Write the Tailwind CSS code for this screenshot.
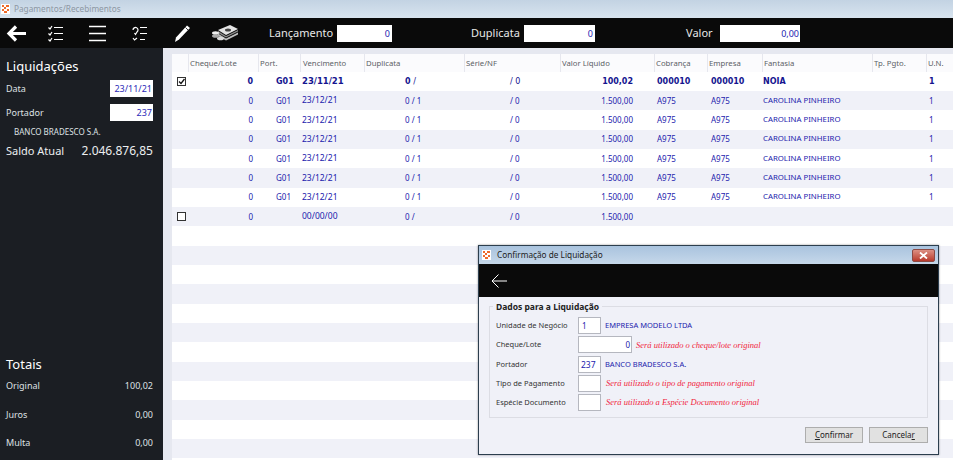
<!DOCTYPE html>
<html lang="pt-BR">
  <head>
    <meta charset="UTF-8" />
    <title>Pagamentos/Recebimentos</title>
    <script src="https://cdn.jsdelivr.net/npm/@tailwindcss/browser@4"></script>
  </head>
  <body class="relative h-[460px] w-[953px] overflow-hidden bg-[#e6e8f0] font-['Noto_Sans',sans-serif] text-[8px]">
    <!-- Title bar -->
    <div class="flex h-[18px] items-center gap-[4px] bg-gradient-to-b from-[#c3d3e3] to-[#d8e4ef] pl-[1px] text-[8.25px] text-[#8d97a3]">
      <svg class="h-[10px] w-[9px]" viewBox="0 0 9 10"><rect width="9" height="10" fill="#fff"/><path d="M1 1h2v2H1zM5 1h3v2H5zM3 3h2v2H3zM1 5h2v2H1zM6 5h2v2H6zM3 7h3v2H3z" fill="#ef6a2a"/></svg>
      <span>Pagamentos/Recebimentos</span>
    </div>

    <!-- Toolbar -->
    <div class="flex h-[30px] items-center bg-[#0a0a0a] text-white">
      <svg class="ml-[6px] h-[17px] w-[20px]" viewBox="0 0 20 17" fill="none" stroke="#fff" stroke-width="3.2"><path d="M20 8.500H3M10 1.500 3 8.500l7 7"/></svg>
      <svg class="ml-[22px] h-[17px] w-[15px]" viewBox="0 0 15 17" fill="none" stroke="#fff" stroke-width="1.2"><path d="M6 2.500h9M6 8.500h9M6 14.500h9M0.500 2.500l1.500 1.500 2-3M0.500 8.500l1.500 1.500 2-3M0.500 14.500l1.500 1.500 2-3"/></svg>
      <svg class="ml-[26px] h-[17px] w-[17px]" viewBox="0 0 17 17" fill="none" stroke="#fff" stroke-width="1.600"><path d="M0 1.500h17M0 8.500h17M0 15.500h17"/></svg>
      <svg class="ml-[26px] h-[17px] w-[15px]" viewBox="0 0 15 17" fill="none" stroke="#fff" stroke-width="1.200"><path d="M8 2.500h7M8 8.500h7M8 14.500h5M1 5a2.500 2.500 0 1 1 4 2L3.500 9.500l-1-1.500M1 13l1.500 2L5 13"/></svg>
      <svg class="ml-[28px] h-[17px] w-[15px]" viewBox="0 0 15 17" fill="#fff"><path d="M12 0.500 15 3 4 14.500 0 17l1-4.500z"/><path d="M10.500 2.500l2.500 2.500" stroke="#0a0a0a" stroke-width=".8"/></svg>
      <svg class="ml-[22px] h-[16px] w-[26px]" viewBox="0 0 26 16"><path d="M6 5 18 0l8 4-12 6z" fill="#e4e4e4"/><path d="M6 6 14 11 26 5v1.500L14 12.500 6 8z" fill="#8a8a8a"/><path d="M6 8.500 14 13.500 26 7.500v2L14 15.500 6 11z" fill="#bdbdbd"/><ellipse cx="16" cy="5" rx="3" ry="1.500" fill="#444"/><ellipse cx="3.500" cy="8" rx="3.500" ry="1.800" fill="#eee"/><ellipse cx="3.500" cy="11" rx="3.500" ry="1.800" fill="#aaa"/><ellipse cx="8.500" cy="13.500" rx="3.500" ry="1.800" fill="#ddd"/></svg>
      <span class="ml-[31px] w-[63px] text-[11px] whitespace-nowrap text-[#e8e8e8]">Lançamento</span>
      <div class="ml-[5px] h-[17px] w-[55px] bg-white pr-[2px] text-right text-[9px] leading-[17px] text-[#2323b0]">0</div>
      <span class="ml-[79px] w-[48px] text-[11px] whitespace-nowrap text-[#e8e8e8]">Duplicata</span>
      <div class="ml-[5px] h-[17px] w-[71px] bg-white pr-[2px] text-right text-[9px] leading-[17px] text-[#2323b0]">0</div>
      <span class="ml-[91px] w-[27px] text-[11px] whitespace-nowrap text-[#e8e8e8]">Valor</span>
      <div class="ml-[7px] h-[17px] w-[80px] bg-white pr-[1px] text-right text-[9px] leading-[17px] text-[#2323b0]">0,00</div>
    </div>

    <div class="flex h-[412px]">
      <!-- Sidebar -->
      <aside class="flex w-[163px] flex-col bg-[#1b1e23] pl-[6px] pr-[10px] text-[#dfe1e4]">
        <h1 class="mt-[9px] text-[13px] leading-[18px] text-white">Liquidações</h1>
        <div class="mt-[5px] flex h-[17px] items-center justify-between text-[9px]">
          <span>Data</span>
          <div class="h-[17px] w-[43px] bg-white pr-[1px] text-right leading-[17px] text-[#2b2bb8]">23/11/21</div>
        </div>
        <div class="mt-[7px] flex h-[17px] items-center justify-between text-[9px]">
          <span>Portador</span>
          <div class="h-[17px] w-[43px] bg-white pr-[1px] text-right leading-[17px] text-[#2b2bb8]">237</div>
        </div>
        <p class="mt-[5px] pl-[8px] text-[8px] leading-[12px]">BANCO BRADESCO S.A.</p>
        <div class="mt-[5px] flex justify-between text-[12px] leading-[16px] text-[#eceef0]">
          <span class="text-[11px]">Saldo Atual</span>
          <span>2.046.876,85</span>
        </div>
        <h2 class="mt-[196px] text-[13px] leading-[18px] text-white">Totais</h2>
        <div class="mt-[6px] flex justify-between text-[9px] leading-[14px]"><span>Original</span><span>100,02</span></div>
        <div class="mt-[15px] flex justify-between text-[9px] leading-[14px]"><span>Juros</span><span>0,00</span></div>
        <div class="mt-[14px] flex justify-between text-[9px] leading-[14px]"><span>Multa</span><span>0,00</span></div>
      </aside>

      <!-- Grid -->
      <main class="ml-[9px] mt-[6px] w-[781px] bg-white text-[8px] text-[#2222ad]">
        <div class="grid h-[18px] grid-cols-[16px_70px_42px_64px_100px_96px_94px_53px_55px_110px_54px_27px] items-center bg-[#fbfbfd] text-[7.75px] leading-[18px] text-[#5b5f66]">
          <span></span>
          <span class="border-l border-[#e6e7ee] pl-[1px]">Cheque/Lote</span>
          <span class="border-l border-[#e6e7ee] pl-[1px]">Port.</span>
          <span class="border-l border-[#e6e7ee] pl-[2px]">Vencimento</span>
          <span class="border-l border-[#e6e7ee] pl-[1px]">Duplicata</span>
          <span class="border-l border-[#e6e7ee] pl-[1px]">Série/NF</span>
          <span class="border-l border-[#e6e7ee] pl-[1px]">Valor Líquido</span>
          <span class="border-l border-[#e6e7ee] pl-[1px]">Cobrança</span>
          <span class="border-l border-[#e6e7ee] pl-[1px]">Empresa</span>
          <span class="border-l border-[#e6e7ee] pl-[1px]">Fantasia</span>
          <span class="border-l border-[#e6e7ee] pl-[1px]">Tp. Pgto.</span>
          <span class="border-l border-[#e6e7ee] pl-[1px]">U.N.</span>
        </div>

        <div>
          <div class="grid h-[19px] grid-cols-[16px_70px_42px_64px_100px_96px_94px_53px_55px_110px_54px_27px] items-center font-['DejaVu_Sans',sans-serif] font-bold text-[#14148f]">
            <svg class="ml-[5px] h-[9px] w-[9px]" viewBox="0 0 9 9" fill="none"><rect x=".5" y=".5" width="8" height="8" stroke="#333"/><path d="M2 4.500 4 6.500 7.500 2" stroke="#111" stroke-width="1.300"/></svg>
            <span class="pr-[5px] text-right">0</span><span class="pl-[18px]">G01</span><span class="pl-[2px] text-[8.5px]">23/11/21</span><span class="pl-[41px]">0 <span class="font-normal">/</span></span><span class="pl-[46px] font-normal">/ 0</span><span class="pr-[21px] text-right">100,02</span><span class="pl-[3px]">000010</span><span class="pl-[4px]">000010</span><span class="pl-[1px]">NOIA</span><span></span><span class="pl-[3px]">1</span>
          </div>
          <div class="grid h-[19.33px] grid-cols-[16px_70px_42px_64px_100px_96px_94px_53px_55px_110px_54px_27px] items-center bg-[#f0f1f8]">
            <span></span><span class="pr-[5px] text-right">0</span><span class="pl-[18px]">G01</span><span class="pl-[2px] text-[8.5px]">23/12/21</span><span class="pl-[41px]">0 / 1</span><span class="pl-[46px]">/ 0</span><span class="pr-[21px] text-right">1.500,00</span><span class="pl-[3px]">A975</span><span class="pl-[4px]">A975</span><span class="pl-[1px] text-[7.8px]">CAROLINA PINHEIRO</span><span></span><span class="pl-[3px]">1</span>
          </div>
          <div class="grid h-[19.33px] grid-cols-[16px_70px_42px_64px_100px_96px_94px_53px_55px_110px_54px_27px] items-center">
            <span></span><span class="pr-[5px] text-right">0</span><span class="pl-[18px]">G01</span><span class="pl-[2px] text-[8.5px]">23/12/21</span><span class="pl-[41px]">0 / 1</span><span class="pl-[46px]">/ 0</span><span class="pr-[21px] text-right">1.500,00</span><span class="pl-[3px]">A975</span><span class="pl-[4px]">A975</span><span class="pl-[1px] text-[7.8px]">CAROLINA PINHEIRO</span><span></span><span class="pl-[3px]">1</span>
          </div>
          <div class="grid h-[19.33px] grid-cols-[16px_70px_42px_64px_100px_96px_94px_53px_55px_110px_54px_27px] items-center bg-[#f0f1f8]">
            <span></span><span class="pr-[5px] text-right">0</span><span class="pl-[18px]">G01</span><span class="pl-[2px] text-[8.5px]">23/12/21</span><span class="pl-[41px]">0 / 1</span><span class="pl-[46px]">/ 0</span><span class="pr-[21px] text-right">1.500,00</span><span class="pl-[3px]">A975</span><span class="pl-[4px]">A975</span><span class="pl-[1px] text-[7.8px]">CAROLINA PINHEIRO</span><span></span><span class="pl-[3px]">1</span>
          </div>
          <div class="grid h-[19.33px] grid-cols-[16px_70px_42px_64px_100px_96px_94px_53px_55px_110px_54px_27px] items-center">
            <span></span><span class="pr-[5px] text-right">0</span><span class="pl-[18px]">G01</span><span class="pl-[2px] text-[8.5px]">23/12/21</span><span class="pl-[41px]">0 / 1</span><span class="pl-[46px]">/ 0</span><span class="pr-[21px] text-right">1.500,00</span><span class="pl-[3px]">A975</span><span class="pl-[4px]">A975</span><span class="pl-[1px] text-[7.8px]">CAROLINA PINHEIRO</span><span></span><span class="pl-[3px]">1</span>
          </div>
          <div class="grid h-[19.33px] grid-cols-[16px_70px_42px_64px_100px_96px_94px_53px_55px_110px_54px_27px] items-center bg-[#f0f1f8]">
            <span></span><span class="pr-[5px] text-right">0</span><span class="pl-[18px]">G01</span><span class="pl-[2px] text-[8.5px]">23/12/21</span><span class="pl-[41px]">0 / 1</span><span class="pl-[46px]">/ 0</span><span class="pr-[21px] text-right">1.500,00</span><span class="pl-[3px]">A975</span><span class="pl-[4px]">A975</span><span class="pl-[1px] text-[7.8px]">CAROLINA PINHEIRO</span><span></span><span class="pl-[3px]">1</span>
          </div>
          <div class="grid h-[19.33px] grid-cols-[16px_70px_42px_64px_100px_96px_94px_53px_55px_110px_54px_27px] items-center">
            <span></span><span class="pr-[5px] text-right">0</span><span class="pl-[18px]">G01</span><span class="pl-[2px] text-[8.5px]">23/12/21</span><span class="pl-[41px]">0 / 1</span><span class="pl-[46px]">/ 0</span><span class="pr-[21px] text-right">1.500,00</span><span class="pl-[3px]">A975</span><span class="pl-[4px]">A975</span><span class="pl-[1px] text-[7.8px]">CAROLINA PINHEIRO</span><span></span><span class="pl-[3px]">1</span>
          </div>
          <div class="grid h-[19.33px] grid-cols-[16px_70px_42px_64px_100px_96px_94px_53px_55px_110px_54px_27px] items-center bg-[#f0f1f8]">
            <svg class="ml-[5px] h-[9px] w-[9px]" viewBox="0 0 9 9" fill="none"><rect x=".5" y=".5" width="8" height="8" fill="#fff" stroke="#333"/></svg>
            <span class="pr-[5px] text-right">0</span><span></span><span class="pl-[2px] text-[8.5px]">00/00/00</span><span class="pl-[41px]">0 /</span><span class="pl-[46px]">/ 0</span><span class="pr-[21px] text-right">1.500,00</span>
          </div>
          <!-- empty rows -->
          <div class="h-[19.33px]"></div>
          <div class="h-[19.33px] bg-[#f0f1f8]"></div>
          <div class="h-[19.33px]"></div>
          <div class="h-[19.33px] bg-[#f0f1f8]"></div>
          <div class="h-[19.33px]"></div>
          <div class="h-[19.33px] bg-[#f0f1f8]"></div>
          <div class="h-[19.33px]"></div>
          <div class="h-[19.33px] bg-[#f0f1f8]"></div>
          <div class="h-[19.33px]"></div>
          <div class="h-[19.33px] bg-[#f0f1f8]"></div>
          <div class="h-[19.33px]"></div>
          <div class="h-[19.33px] bg-[#f0f1f8]"></div>
        </div>
      </main>
    </div>

    <!-- Confirmation window -->
    <div class="absolute left-[478px] top-[245px] flex h-[210px] w-[461px] flex-col border border-[#2c3e4e] bg-[#f0f1f8] text-[7.5px] shadow-[0_0_2px_rgba(0,0,0,0.4)]">
      <div class="flex h-[18px] items-center gap-[3px] bg-gradient-to-b from-[#a9c3de] to-[#c6d8ea] pl-[3px] text-[8.25px] text-[#222]">
        <svg class="h-[10px] w-[9px]" viewBox="0 0 9 10"><rect width="9" height="10" fill="#fff"/><path d="M1 1h2v2H1zM5 1h3v2H5zM3 3h2v2H3zM1 5h2v2H1zM6 5h2v2H6zM3 7h3v2H3z" fill="#ef6a2a"/></svg>
        <span class="ml-[3px]">Confirmação de Liquidação</span>
        <div class="ml-auto mr-[3px] flex h-[13px] w-[23px] items-center justify-center rounded-[2px] border border-[#8c4a44] bg-gradient-to-b from-[#dc8f83] to-[#b8392c]">
          <svg class="h-[7px] w-[9px]" viewBox="0 0 9 7" stroke="#fff" stroke-width="1.800"><path d="M1 0.500 8 6.500M8 0.500 1 6.500"/></svg>
        </div>
      </div>
      <div class="flex h-[33px] items-center bg-[#0a0a0a] pl-[12px]">
        <svg class="h-[14px] w-[16px]" viewBox="0 0 16 14" fill="none" stroke="#fff"><path d="M16 7H1M7.500 0.500 1 7l6.500 6.500"/></svg>
      </div>
      <fieldset class="relative mx-[10px] mt-[9px] h-[112px] border border-[#dcdde4] pl-[6px] pt-[9px]">
        <legend class="absolute -top-[6px] left-[3px] bg-[#f0f1f8] px-[3px] text-[8.5px] leading-[12px] font-bold text-[#222]">Dados para a Liquidação</legend>
        <div class="flex h-[19.300px] items-center text-[#333]">
          <span class="w-[82px] whitespace-nowrap">Unidade de Negócio</span>
          <div class="h-[17px] w-[23px] border border-[#b5b7bf] bg-white pl-[3px] text-[8px] leading-[15px] text-[#2222ad]">1</div>
          <span class="ml-[4px] text-[#2222ad]">EMPRESA MODELO LTDA</span>
        </div>
        <div class="flex h-[19.300px] items-center text-[#333]">
          <span class="w-[82px] whitespace-nowrap">Cheque/Lote</span>
          <div class="h-[17px] w-[54px] border border-[#b5b7bf] bg-white pr-[1px] text-right text-[8px] leading-[15px] text-[#2222ad]">0</div>
          <span class="ml-[4px] font-['Liberation_Serif',serif] text-[8.500px] italic text-[#f0243c]">Será utilizado o cheque/lote original</span>
        </div>
        <div class="flex h-[19.300px] items-center text-[#333]">
          <span class="w-[82px] whitespace-nowrap">Portador</span>
          <div class="h-[17px] w-[23px] border border-[#b5b7bf] bg-white pl-[2px] text-[8.500px] leading-[15px] text-[#2222ad]">237</div>
          <span class="ml-[4px] text-[#2222ad]">BANCO BRADESCO S.A.</span>
        </div>
        <div class="flex h-[19.300px] items-center text-[#333]">
          <span class="w-[82px] whitespace-nowrap">Tipo de Pagamento</span>
          <div class="h-[17px] w-[23px] border border-[#b5b7bf] bg-white"></div>
          <span class="ml-[5px] font-['Liberation_Serif',serif] text-[8.500px] italic text-[#f0243c]">Será utilizado o tipo de pagamento original</span>
        </div>
        <div class="flex h-[19.300px] items-center text-[#333]">
          <span class="w-[82px] whitespace-nowrap">Espécie Documento</span>
          <div class="h-[17px] w-[23px] border border-[#b5b7bf] bg-white"></div>
          <span class="ml-[5px] font-['Liberation_Serif',serif] text-[8.500px] italic text-[#f0243c]">Será utilizado a Espécie Documento original</span>
        </div>
      </fieldset>
      <div class="mr-[10px] mt-[9px] flex justify-end gap-[6px] text-[#222]">
        <button class="h-[16px] w-[58px] border border-[#adadad] bg-[#e1e1e1] text-[8px] leading-[14px]"><span class="underline">C</span>onfirmar</button>
        <button class="h-[16px] w-[59px] border border-[#adadad] bg-[#e1e1e1] text-[8px] leading-[14px]">Cancela<span class="underline">r</span></button>
      </div>
    </div>
  </body>
</html>
